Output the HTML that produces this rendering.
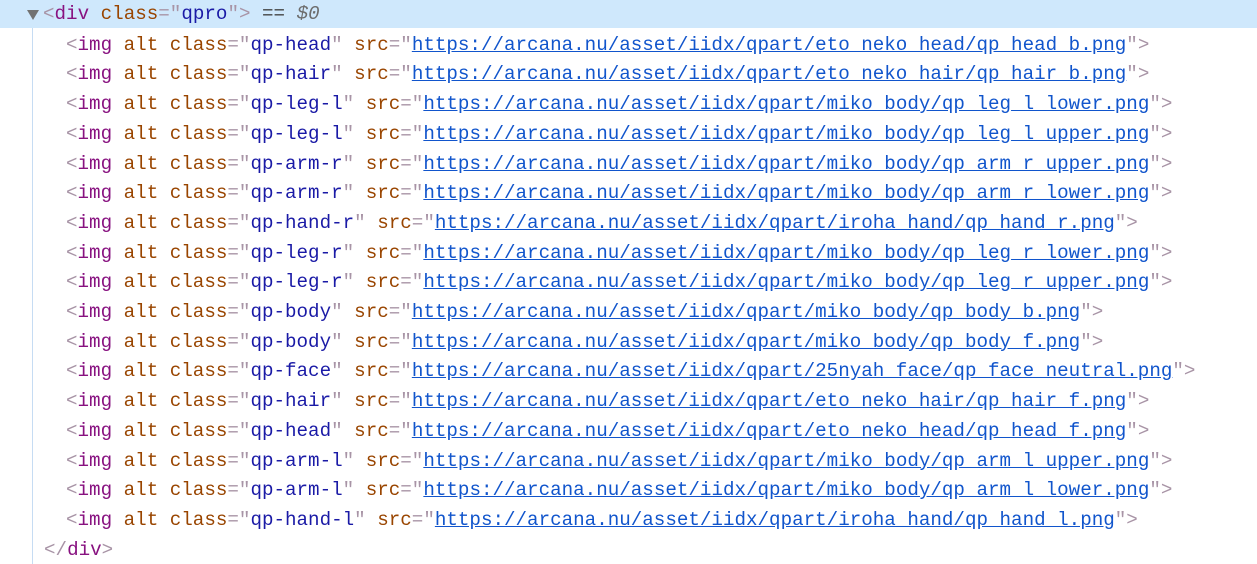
<!DOCTYPE html>
<html><head><meta charset="utf-8"><style>
html,body{margin:0;padding:0;background:#fff;width:1257px;height:564px;overflow:hidden}
body{font-family:"Liberation Mono",monospace;font-size:19.22px;position:relative}
.l{position:absolute;left:0;height:29.7px;line-height:29.7px;white-space:pre;margin-top:1px}
.hl{background:#cfe8fc;width:1257px;height:28px;top:0;margin-top:0}
.t{color:#881280}.a{color:#994500}.v{color:#1a1aa6}.p{color:#a894a6}.u{color:#1155cc;text-decoration:underline}.g{color:#6d6d6d;font-style:italic}.e{color:#444}
.guide{position:absolute;left:32px;top:28px;width:1px;height:536px;background:#c6dcf3}
.tri{position:absolute;left:27px;top:10px;width:0;height:0;border-left:6px solid transparent;border-right:6px solid transparent;border-top:10px solid #727272}
</style></head><body>
<div class="l hl"></div>
<div class="tri"></div>
<div class="guide"></div>
<div class="l" style="top:0;left:43px;margin-top:0"><span class="p">&lt;</span><span class="t">div</span> <span class="a">class</span><span class="p">="</span><span class="v">qpro</span><span class="p">"&gt;</span> <span class="e">==</span> <span class="g">$0</span></div>
<div class="l" style="top:535px;left:44px"><span class="p">&lt;/</span><span class="t">div</span><span class="p">&gt;</span></div>
<div class="l" style="top:29.7px;left:66px"><span class="p">&lt;</span><span class="t">img</span> <span class="a">alt</span> <span class="a">class</span><span class="p">="</span><span class="v">qp-head</span><span class="p">"</span> <span class="a">src</span><span class="p">="</span><span class="u">https://arcana.nu/asset/iidx/qpart/eto_neko_head/qp_head_b.png</span><span class="p">"&gt;</span></div>
<div class="l" style="top:59.4px;left:66px"><span class="p">&lt;</span><span class="t">img</span> <span class="a">alt</span> <span class="a">class</span><span class="p">="</span><span class="v">qp-hair</span><span class="p">"</span> <span class="a">src</span><span class="p">="</span><span class="u">https://arcana.nu/asset/iidx/qpart/eto_neko_hair/qp_hair_b.png</span><span class="p">"&gt;</span></div>
<div class="l" style="top:89.1px;left:66px"><span class="p">&lt;</span><span class="t">img</span> <span class="a">alt</span> <span class="a">class</span><span class="p">="</span><span class="v">qp-leg-l</span><span class="p">"</span> <span class="a">src</span><span class="p">="</span><span class="u">https://arcana.nu/asset/iidx/qpart/miko_body/qp_leg_l_lower.png</span><span class="p">"&gt;</span></div>
<div class="l" style="top:118.8px;left:66px"><span class="p">&lt;</span><span class="t">img</span> <span class="a">alt</span> <span class="a">class</span><span class="p">="</span><span class="v">qp-leg-l</span><span class="p">"</span> <span class="a">src</span><span class="p">="</span><span class="u">https://arcana.nu/asset/iidx/qpart/miko_body/qp_leg_l_upper.png</span><span class="p">"&gt;</span></div>
<div class="l" style="top:148.5px;left:66px"><span class="p">&lt;</span><span class="t">img</span> <span class="a">alt</span> <span class="a">class</span><span class="p">="</span><span class="v">qp-arm-r</span><span class="p">"</span> <span class="a">src</span><span class="p">="</span><span class="u">https://arcana.nu/asset/iidx/qpart/miko_body/qp_arm_r_upper.png</span><span class="p">"&gt;</span></div>
<div class="l" style="top:178.2px;left:66px"><span class="p">&lt;</span><span class="t">img</span> <span class="a">alt</span> <span class="a">class</span><span class="p">="</span><span class="v">qp-arm-r</span><span class="p">"</span> <span class="a">src</span><span class="p">="</span><span class="u">https://arcana.nu/asset/iidx/qpart/miko_body/qp_arm_r_lower.png</span><span class="p">"&gt;</span></div>
<div class="l" style="top:207.9px;left:66px"><span class="p">&lt;</span><span class="t">img</span> <span class="a">alt</span> <span class="a">class</span><span class="p">="</span><span class="v">qp-hand-r</span><span class="p">"</span> <span class="a">src</span><span class="p">="</span><span class="u">https://arcana.nu/asset/iidx/qpart/iroha_hand/qp_hand_r.png</span><span class="p">"&gt;</span></div>
<div class="l" style="top:237.6px;left:66px"><span class="p">&lt;</span><span class="t">img</span> <span class="a">alt</span> <span class="a">class</span><span class="p">="</span><span class="v">qp-leg-r</span><span class="p">"</span> <span class="a">src</span><span class="p">="</span><span class="u">https://arcana.nu/asset/iidx/qpart/miko_body/qp_leg_r_lower.png</span><span class="p">"&gt;</span></div>
<div class="l" style="top:267.3px;left:66px"><span class="p">&lt;</span><span class="t">img</span> <span class="a">alt</span> <span class="a">class</span><span class="p">="</span><span class="v">qp-leg-r</span><span class="p">"</span> <span class="a">src</span><span class="p">="</span><span class="u">https://arcana.nu/asset/iidx/qpart/miko_body/qp_leg_r_upper.png</span><span class="p">"&gt;</span></div>
<div class="l" style="top:297px;left:66px"><span class="p">&lt;</span><span class="t">img</span> <span class="a">alt</span> <span class="a">class</span><span class="p">="</span><span class="v">qp-body</span><span class="p">"</span> <span class="a">src</span><span class="p">="</span><span class="u">https://arcana.nu/asset/iidx/qpart/miko_body/qp_body_b.png</span><span class="p">"&gt;</span></div>
<div class="l" style="top:326.7px;left:66px"><span class="p">&lt;</span><span class="t">img</span> <span class="a">alt</span> <span class="a">class</span><span class="p">="</span><span class="v">qp-body</span><span class="p">"</span> <span class="a">src</span><span class="p">="</span><span class="u">https://arcana.nu/asset/iidx/qpart/miko_body/qp_body_f.png</span><span class="p">"&gt;</span></div>
<div class="l" style="top:356.4px;left:66px"><span class="p">&lt;</span><span class="t">img</span> <span class="a">alt</span> <span class="a">class</span><span class="p">="</span><span class="v">qp-face</span><span class="p">"</span> <span class="a">src</span><span class="p">="</span><span class="u">https://arcana.nu/asset/iidx/qpart/25nyah_face/qp_face_neutral.png</span><span class="p">"&gt;</span></div>
<div class="l" style="top:386.1px;left:66px"><span class="p">&lt;</span><span class="t">img</span> <span class="a">alt</span> <span class="a">class</span><span class="p">="</span><span class="v">qp-hair</span><span class="p">"</span> <span class="a">src</span><span class="p">="</span><span class="u">https://arcana.nu/asset/iidx/qpart/eto_neko_hair/qp_hair_f.png</span><span class="p">"&gt;</span></div>
<div class="l" style="top:415.8px;left:66px"><span class="p">&lt;</span><span class="t">img</span> <span class="a">alt</span> <span class="a">class</span><span class="p">="</span><span class="v">qp-head</span><span class="p">"</span> <span class="a">src</span><span class="p">="</span><span class="u">https://arcana.nu/asset/iidx/qpart/eto_neko_head/qp_head_f.png</span><span class="p">"&gt;</span></div>
<div class="l" style="top:445.5px;left:66px"><span class="p">&lt;</span><span class="t">img</span> <span class="a">alt</span> <span class="a">class</span><span class="p">="</span><span class="v">qp-arm-l</span><span class="p">"</span> <span class="a">src</span><span class="p">="</span><span class="u">https://arcana.nu/asset/iidx/qpart/miko_body/qp_arm_l_upper.png</span><span class="p">"&gt;</span></div>
<div class="l" style="top:475.2px;left:66px"><span class="p">&lt;</span><span class="t">img</span> <span class="a">alt</span> <span class="a">class</span><span class="p">="</span><span class="v">qp-arm-l</span><span class="p">"</span> <span class="a">src</span><span class="p">="</span><span class="u">https://arcana.nu/asset/iidx/qpart/miko_body/qp_arm_l_lower.png</span><span class="p">"&gt;</span></div>
<div class="l" style="top:504.9px;left:66px"><span class="p">&lt;</span><span class="t">img</span> <span class="a">alt</span> <span class="a">class</span><span class="p">="</span><span class="v">qp-hand-l</span><span class="p">"</span> <span class="a">src</span><span class="p">="</span><span class="u">https://arcana.nu/asset/iidx/qpart/iroha_hand/qp_hand_l.png</span><span class="p">"&gt;</span></div>
</body></html>
